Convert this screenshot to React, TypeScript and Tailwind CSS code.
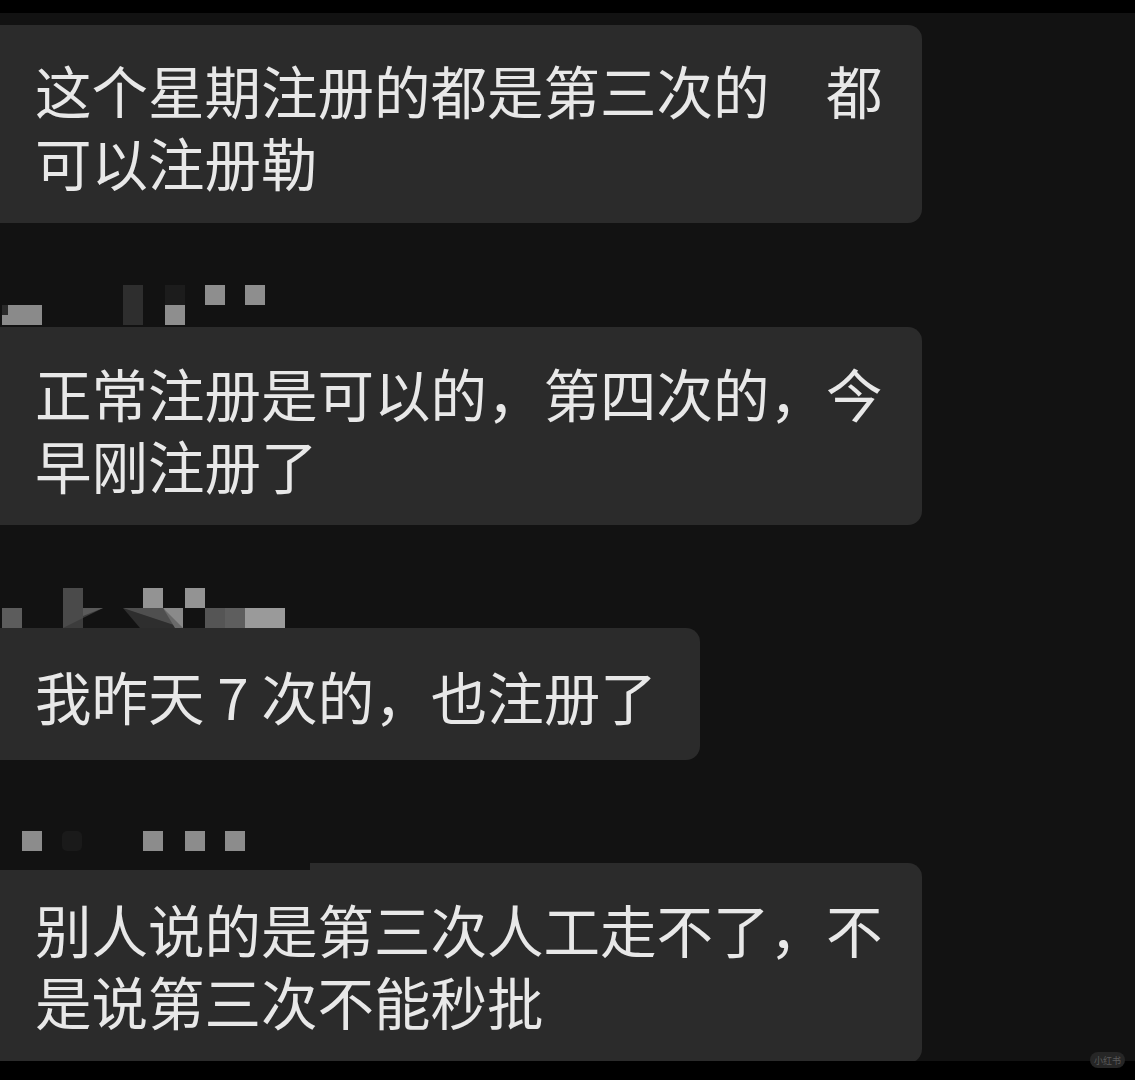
import React from "react";

const font = { fontFamily: '"Noto Sans CJK SC", "Noto Sans", sans-serif' };

function Bubble({
  lines,
  width,
  pt,
  pb,
  children,
}: {
  lines: string[];
  width: string;
  pt: string;
  pb: string;
  children?: React.ReactNode;
}) {
  return (
    <div
      className={`relative ${width} ${pt} ${pb} shrink-0 rounded-r-[14px] bg-[#2b2b2b] pl-[35px] text-[56.5px] leading-[72px] text-[#e8e8e8] whitespace-pre`}
    >
      {children}
      {lines.map((l, i) => (
        <div key={i}>{l}</div>
      ))}
    </div>
  );
}

function Mosaic1() {
  return (
    <svg width="300" height="42" viewBox="0 0 300 42" className="block">
      <rect x="2" y="20" width="40" height="20" fill="#8a8a8a" />
      <rect x="2" y="20" width="6" height="10" fill="#2a2a2a" />
      <rect x="123" y="0" width="20" height="40" fill="#2e2e2e" />
      <rect x="165" y="0" width="20" height="20" fill="#1c1c1c" />
      <rect x="165" y="20" width="20" height="20" fill="#8e8e8e" />
      <rect x="205" y="0" width="20" height="20" fill="#8e8e8e" />
      <rect x="245" y="0" width="20" height="20" fill="#8e8e8e" />
    </svg>
  );
}

function Mosaic2() {
  return (
    <svg width="300" height="40" viewBox="0 0 300 40" className="block">
      <rect x="2" y="20" width="20" height="20" fill="#5c5c5c" />
      <rect x="63" y="0" width="20" height="40" fill="#4a4a4a" />
      <polygon points="83,20 103,20 63,40 83,40" fill="#3c3c3c" />
      <polygon points="83,20 103,20 83,28" fill="#5a5a5a" />
      <rect x="143" y="0" width="20" height="20" fill="#939393" />
      <rect x="185" y="0" width="20" height="20" fill="#939393" />
      <polygon points="123,20 163,20 183,40" fill="#555555" />
      <polygon points="163,20 183,20 183,40 175,40" fill="#8a8a8a" />
      <polygon points="123,20 163,20 183,40 140,40" fill="#4a4a4a" opacity="0.5" />
      <rect x="205" y="20" width="20" height="20" fill="#555555" />
      <rect x="225" y="20" width="20" height="20" fill="#5e5e5e" />
      <rect x="245" y="20" width="40" height="20" fill="#9a9a9a" />
    </svg>
  );
}

function Mosaic3() {
  return (
    <svg width="300" height="32" viewBox="0 0 300 32" className="block">
      <rect x="22" y="0" width="20" height="20" fill="#8c8c8c" />
      <rect x="62" y="0" width="20" height="20" rx="5" fill="#1a1a1a" />
      <rect x="143" y="0" width="20" height="20" fill="#8c8c8c" />
      <rect x="185" y="0" width="20" height="20" fill="#8c8c8c" />
      <rect x="225" y="0" width="20" height="20" fill="#8c8c8c" />
    </svg>
  );
}

export default function App() {
  return (
    <div
      className="relative flex h-[1080px] w-[1135px] flex-col overflow-hidden bg-black"
      style={font}
    >
      <div className="h-[13px] shrink-0 bg-black" />
      <div className="flex min-h-0 flex-1 flex-col overflow-hidden bg-[#121212]">
        <div className="mt-[12px]">
          <Bubble
            width="w-[922px]"
            pt="pt-[28px]"
            pb="pb-[26px]"
            lines={["这个星期注册的都是第三次的\u3000都", "可以注册勒"]}
          />
        </div>

        <div className="mt-[62px] h-[42px] shrink-0">
          <Mosaic1 />
        </div>
        <Bubble
          width="w-[922px]"
          pt="pt-[29px]"
          pb="pb-[25px]"
          lines={["正常注册是可以的，第四次的，今", "早刚注册了"]}
        />

        <div className="mt-[63px] h-[40px] shrink-0">
          <Mosaic2 />
        </div>
        <Bubble
          width="w-[700px]"
          pt="pt-[31px]"
          pb="pb-[29px]"
          lines={["我昨天 7 次的，也注册了"]}
        />

        <div className="mt-[71px] h-[32px] shrink-0">
          <Mosaic3 />
        </div>
        <Bubble
          width="w-[922px]"
          pt="pt-[29px]"
          pb="pb-[27px]"
          lines={["别人说的是第三次人工走不了，不", "是说第三次不能秒批"]}
        >
          <div className="absolute left-0 top-0 h-[7px] w-[310px] bg-[#121212]" />
        </Bubble>
      </div>
      <div className="h-[19px] shrink-0 bg-black" />

      <div className="absolute bottom-[12px] right-[10px] flex h-[16px] items-center rounded-full bg-[#262626] px-[4px] text-[9px] leading-none text-[#5a5a5a]">
        小红书
      </div>
    </div>
  );
}
